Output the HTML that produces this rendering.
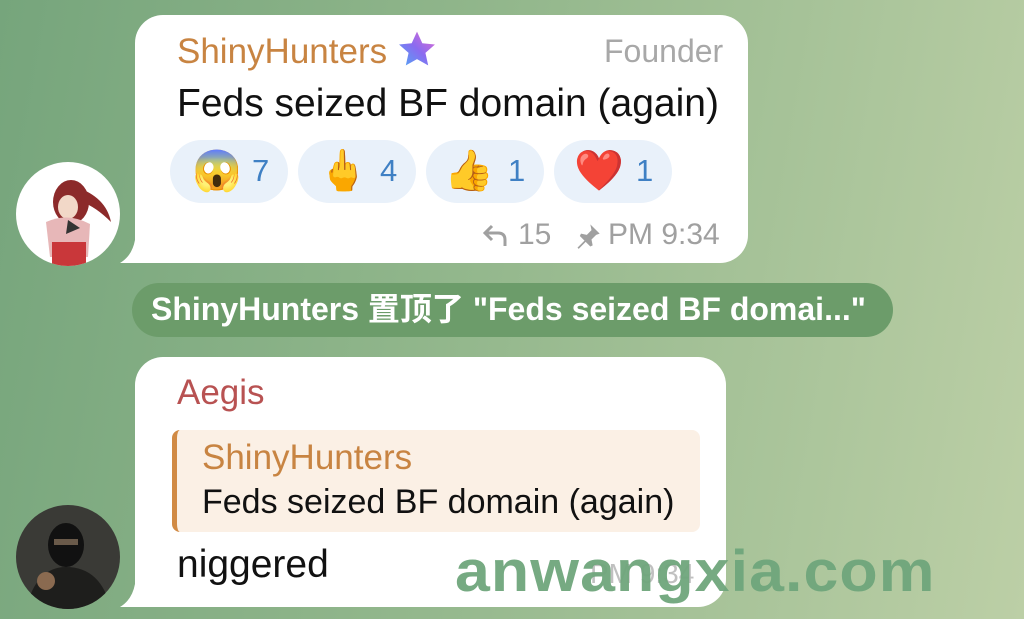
<!DOCTYPE html>
<html><head><meta charset="utf-8"><style>
*{margin:0;padding:0;box-sizing:border-box}
body{width:1024px;height:619px;overflow:hidden;position:relative;font-family:"Liberation Sans","Noto Sans CJK SC",sans-serif;background:linear-gradient(100deg,#76a57c 0%,#8fb58a 40%,#a9c49a 75%,#bccfa6 100%)}
.abs{position:absolute;white-space:nowrap;line-height:1.15}
.bub{position:absolute;background:#fff;border-radius:28px}
.sq{display:inline-block;transform-origin:left center}
.av{position:absolute;border-radius:50%;overflow:hidden}
.re{position:absolute;top:140px;width:118px;height:63px;border-radius:32px;background:#e9f1fa}
.re span{position:absolute;top:8px;font-size:40px;line-height:46px}
.re b{position:absolute;left:82px;top:13px;font-weight:normal;color:#3f80c4;font-size:31px}
</style></head><body>
<div class="bub" style="left:135px;top:15px;width:613px;height:248px;border-bottom-left-radius:0"></div>
<svg class="abs" style="left:120px;top:240px" width="20" height="23"><path d="M15 0 L15 23 L0 23 Q12 16 15 0Z" fill="#fff"/></svg>
<div class="abs" style="left:177px;top:32px;font-size:35px;color:#c88442">ShinyHunters</div>
<svg class="abs" style="left:394px;top:28px" width="46" height="44" viewBox="0 0 24 24"><defs><linearGradient id="g" x1="0" y1="1" x2="1" y2="0"><stop offset="0" stop-color="#4fa8f5"/><stop offset=".5" stop-color="#8a6bf0"/><stop offset="1" stop-color="#e86bd0"/></linearGradient></defs><path d="M12 2l2.9 6.3 6.9.7-5.2 4.6 1.5 6.8L12 17l-6.1 3.4 1.5-6.8L2.2 9l6.9-.7z" fill="url(#g)"/></svg>
<div class="abs" style="left:604px;top:33px;font-size:32px;color:#a8a8a8">Founder</div>
<div class="abs" style="left:177px;top:82px;font-size:39px;color:#111">Feds seized BF domain (again)</div>
<div class="re" style="left:170px"><span style="left:22px">😱</span><b>7</b></div>
<div class="re" style="left:298px"><span style="left:20px">🖕</span><b>4</b></div>
<div class="re" style="left:426px"><span style="left:18px">👍</span><b>1</b></div>
<div class="re" style="left:554px"><span style="left:20px">❤️</span><b>1</b></div>
<svg class="abs" style="left:482px;top:222px" width="28" height="26" viewBox="0 0 28 26"><path d="M10 4 L3 11 L10 18 M3 11 H16 Q23 11 23 18 V24" stroke="#a0a0a0" stroke-width="3" fill="none"/></svg>
<div class="abs" style="left:518px;top:218px;font-size:30px;color:#a0a0a0">15</div>
<svg class="abs" style="left:574px;top:222px" width="28" height="28" viewBox="0 0 24 24"><path d="M14 2l8 8-3 1-4 4 1 5-2 1-4-4-6 6-1-1 6-6-4-4 1-2 5 1 4-4z" fill="#a0a0a0"/></svg>
<div class="abs" style="left:608px;top:218px;font-size:30px;color:#a0a0a0">PM 9:34</div>
<div class="av" style="left:16px;top:162px;width:104px;height:104px;background:#fff">
<svg width="104" height="104"><ellipse cx="55" cy="40" rx="18" ry="22" fill="#8c2a2a"/><path d="M60 25 Q90 35 95 60 Q80 45 66 40Z" fill="#8c2a2a"/><ellipse cx="52" cy="45" rx="10" ry="12" fill="#f2d8c8"/><path d="M30 60 Q52 50 74 62 L72 95 L34 95Z" fill="#e7b7b8"/><path d="M36 80 H70 V104 H36Z" fill="#c9373a"/><path d="M52 58 L64 66 L50 72Z" fill="#333"/></svg></div>
<div class="abs" style="left:132px;top:283px;width:761px;height:54px;border-radius:27px;background:#6c9c6a"></div>
<div class="abs" style="left:151px;top:291px;font-size:32px;color:#fff;font-weight:bold">ShinyHunters 置顶了 "Feds seized BF domai..."</div>
<div class="bub" style="left:135px;top:357px;width:591px;height:250px;border-bottom-left-radius:0"></div>
<svg class="abs" style="left:120px;top:584px" width="20" height="23"><path d="M15 0 L15 23 L0 23 Q12 16 15 0Z" fill="#fff"/></svg>
<div class="abs" style="left:177px;top:373px;font-size:35px;color:#b85252">Aegis</div>
<div class="abs" style="left:172px;top:430px;width:528px;height:102px;background:#fbf0e5;border-radius:8px;border-left:5px solid #d18a44"></div>
<div class="abs" style="left:202px;top:438px;font-size:35px;color:#c88442">ShinyHunters</div>
<div class="abs" style="left:202px;top:483px;font-size:34px;color:#111">Feds seized BF domain (again)</div>
<div class="abs" style="left:177px;top:543px;font-size:39px;color:#111">niggered</div>
<div class="abs" style="left:590px;top:558px;font-size:28px;color:#c0c0c0">PM 9:34</div>
<div class="av" style="left:16px;top:505px;width:104px;height:104px;background:#3a3a36">
<svg width="104" height="104"><ellipse cx="50" cy="40" rx="18" ry="22" fill="#111"/><path d="M10 104 Q20 62 50 62 Q85 62 95 104Z" fill="#1e1e1c"/><rect x="38" y="34" width="24" height="6" fill="#6a5a4a"/><circle cx="30" cy="76" r="9" fill="#8a6a50"/></svg></div>
<div class="abs" style="left:455px;top:539px;font-size:58px;font-weight:bold;color:#6fa67c;opacity:.95;letter-spacing:1px"><span class="sq" style="transform:scaleX(1.08)">anwangxia.com</span></div>
</body></html>
